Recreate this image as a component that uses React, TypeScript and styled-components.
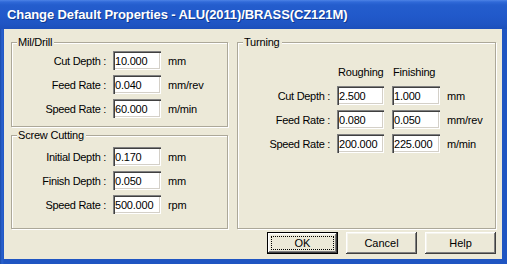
import React from "react";
import styled, { createGlobalStyle } from "styled-components";

const Global = createGlobalStyle`
  html, body { margin: 0; padding: 0; background: #ffffff; }
  * { box-sizing: border-box; }
`;

const Window = styled.div`
  width: 507px;
  height: 264px;
  display: flex;
  flex-direction: column;
  background: #1f55c2;
  font-family: "Liberation Sans", Arial, sans-serif;
  font-size: 11px;
  color: #000;
`;

const TitleBar = styled.div`
  height: 29px;
  flex: none;
  display: flex;
  align-items: center;
  padding: 0 0 1px 7px;
  background: linear-gradient(
    to bottom,
    #4d83e6 0px,
    #2f69d8 2px,
    #245dcd 5px,
    #2159ca 16px,
    #1f55c3 24px,
    #1c4fbb 29px
  );
`;

const TitleText = styled.span`
  font-family: "Liberation Sans", Arial, sans-serif;
  font-weight: bold;
  font-size: 13px;
  letter-spacing: -0.1px;
  color: #ffffff;
  text-shadow: 1px 1px 0 #0f3a8f;
  white-space: nowrap;
`;

const Frame = styled.div`
  flex: 1;
  display: flex;
  padding: 0 5px 5px 4px;
  background: linear-gradient(to right, #1a4aa8 0px, #2a62cf 2px, #1f55c2 4px);
`;

const Client = styled.div`
  flex: 1;
  display: flex;
  flex-direction: column;
  padding: 13px 6px 0 7px;
  background: #ece9d8;
`;

const TopRow = styled.div`
  display: flex;
  gap: 9px;
  height: 187px;
`;

const LeftColumn = styled.div`
  width: 217px;
  display: flex;
  flex-direction: column;
  gap: 8px;
`;

const GroupBox = styled.div<{ $h: number; $pt: number; $w?: number }>`
  position: relative;
  width: ${(p) => (p.$w ? `${p.$w}px` : "auto")};
  height: ${(p) => p.$h}px;
  border: 1px solid #aca899;
  box-shadow: inset 1px 1px 0 #ffffff, 1px 1px 0 #ffffff;
  padding-top: ${(p) => p.$pt}px;
`;

const GroupLabel = styled.span`
  position: absolute;
  left: 5px;
  top: -7px;
  padding: 0 2px 0 1px;
  line-height: 13px;
  background: #ece9d8;
  letter-spacing: -0.2px;
`;

const FieldGrid = styled.div<{ $cols: string }>`
  display: grid;
  grid-template-columns: ${(p) => p.$cols};
  grid-auto-rows: 19px;
  row-gap: 5px;
  column-gap: 7px;
  align-items: center;
`;

const Label = styled.span`
  text-align: right;
  white-space: nowrap;
  letter-spacing: -0.3px;
`;

const Unit = styled.span`
  white-space: nowrap;
  letter-spacing: -0.2px;
`;

const Header = styled.span<{ $ml?: number }>`
  padding-left: ${(p) => 1 + (p.$ml ?? 0)}px;
  letter-spacing: -0.2px;
`;

const Field = styled.input<{ $ml?: number }>`
  width: calc(100% - ${(p) => p.$ml ?? 0}px);
  margin: 0 0 0 ${(p) => p.$ml ?? 0}px;
  height: 19px;
  border: none;
  outline: none;
  padding: 0 0 0 2px;
  background: #ffffff;
  font-family: "Liberation Sans", Arial, sans-serif;
  font-size: 11px;
  letter-spacing: -0.2px;
  color: #000;
  box-shadow: inset 1px 1px 0 #808080, inset 2px 2px 0 #404040,
    inset -1px -1px 0 #ffffff, inset -2px -2px 0 #d4d0c8;
`;

const HeaderRow = styled.div`
  display: grid;
  grid-template-columns: 92px 47px 49px;
  column-gap: 7px;
  height: 13px;
  line-height: 13px;
  margin-bottom: 7px;
`;

const ButtonRow = styled.div`
  display: flex;
  justify-content: flex-end;
  gap: 8px;
  margin-top: 3px;
`;

const Button = styled.button<{ $default?: boolean }>`
  position: relative;
  width: 71px;
  height: 22px;
  margin: 0;
  padding: 0;
  border: ${(p) => (p.$default ? "1px solid #000" : "none")};
  background: #ece9d8;
  font-family: "Liberation Sans", Arial, sans-serif;
  font-size: 11px;
  color: #000;
  box-shadow: inset -1px -1px 0 #404040, inset 1px 1px 0 #ffffff,
    inset -2px -2px 0 #808080, inset 2px 2px 0 #f4f3ec;
  &::after {
    content: "";
    display: ${(p) => (p.$default ? "block" : "none")};
    position: absolute;
    inset: 3px;
    border: 1px dotted #000;
  }
`;

type Row = { label: string; values: string[]; unit: string };

const milRows: Row[] = [
  { label: "Cut Depth :", values: ["10.000"], unit: "mm" },
  { label: "Feed Rate :", values: ["0.040"], unit: "mm/rev" },
  { label: "Speed Rate :", values: ["60.000"], unit: "m/min" },
];

const screwRows: Row[] = [
  { label: "Initial Depth :", values: ["0.170"], unit: "mm" },
  { label: "Finish Depth :", values: ["0.050"], unit: "mm" },
  { label: "Speed Rate :", values: ["500.000"], unit: "rpm" },
];

const turnRows: Row[] = [
  { label: "Cut Depth :", values: ["2.500", "1.000"], unit: "mm" },
  { label: "Feed Rate :", values: ["0.080", "0.050"], unit: "mm/rev" },
  { label: "Speed Rate :", values: ["200.000", "225.000"], unit: "m/min" },
];

const Rows: React.FC<{ rows: Row[]; cols: string; offsets?: number[] }> = ({
  rows,
  cols,
  offsets = [],
}) => (
  <FieldGrid $cols={cols}>
    {rows.map((r) => (
      <React.Fragment key={r.label}>
        <Label>{r.label}</Label>
        {r.values.map((v, i) => (
          <Field key={i} defaultValue={v} $ml={offsets[i] ?? 0} />
        ))}
        <Unit>{r.unit}</Unit>
      </React.Fragment>
    ))}
  </FieldGrid>
);

export default function App() {
  return (
    <>
      <Global />
      <Window>
        <TitleBar>
          <TitleText>Change Default Properties - ALU(2011)/BRASS(CZ121M)</TitleText>
        </TitleBar>
        <Frame>
          <Client>
            <TopRow>
              <LeftColumn>
                <GroupBox $h={85} $pt={8}>
                  <GroupLabel>Mil/Drill</GroupLabel>
                  <Rows rows={milRows} cols="94px 48px auto" />
                </GroupBox>
                <GroupBox $h={94} $pt={11}>
                  <GroupLabel>Screw Cutting</GroupLabel>
                  <Rows rows={screwRows} cols="94px 48px auto" />
                </GroupBox>
              </LeftColumn>
              <GroupBox $h={187} $pt={23} $w={259}>
                <GroupLabel>Turning</GroupLabel>
                <HeaderRow>
                  <span />
                  <Header>Roughing</Header>
                  <Header $ml={1}>Finishing</Header>
                </HeaderRow>
                <Rows rows={turnRows} cols="92px 47px 49px auto" offsets={[0, 1]} />
              </GroupBox>
            </TopRow>
            <ButtonRow>
              <Button $default>OK</Button>
              <Button>Cancel</Button>
              <Button>Help</Button>
            </ButtonRow>
          </Client>
        </Frame>
      </Window>
    </>
  );
}
